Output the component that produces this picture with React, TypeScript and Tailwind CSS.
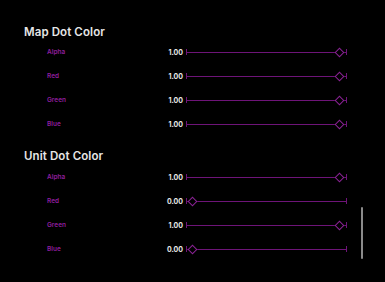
import React from "react";

type Row = { label: string; value: number };

const sections: { title: string; rows: Row[] }[] = [
  {
    title: "Map Dot Color",
    rows: [
      { label: "Alpha", value: 1 },
      { label: "Red", value: 1 },
      { label: "Green", value: 1 },
      { label: "Blue", value: 1 },
    ],
  },
  {
    title: "Unit Dot Color",
    rows: [
      { label: "Alpha", value: 1 },
      { label: "Red", value: 0 },
      { label: "Green", value: 1 },
      { label: "Blue", value: 0 },
    ],
  },
];

function Slider({ value }: { value: number }) {
  const left = 6.5 + value * 147;
  return (
    <div className="relative flex items-center w-[161px] h-[12px]">
      <div className="w-[1px] h-[6px] bg-[#6e1478]" />
      <div className="flex-1 h-[1px] bg-[#6e1478]" />
      <div className="w-[1px] h-[6px] bg-[#6e1478]" />
      <div
        className="absolute top-[2.5px] w-[7px] h-[7px] border border-[#8a2294] bg-black rotate-45"
        style={{ left: left - 3.5 }}
      />
    </div>
  );
}

export default function App() {
  return (
    <div
      className="relative w-[385px] h-[282px] bg-black overflow-hidden pl-[24px] pt-[25px] flex flex-col gap-[13px]"
      style={{ fontFamily: "Inter, 'Noto Sans', sans-serif" }}
    >
      {sections.map((s, i) => (
        <div key={s.title} className="flex flex-col">
          <div className="h-[15px] leading-[15px] text-[11.5px] font-semibold text-[#e6e6e6] tracking-[0.1px]">
            {s.title}
          </div>
          <div className={i === 0 ? "flex flex-col" : "flex flex-col pt-[1px]"}>
            {s.rows.map((r) => (
              <div key={r.label} className="flex items-center h-[24px]">
                <span className="ml-[23px] w-[110px] leading-none pt-[1px] text-[6.5px] font-semibold text-[#8e1e9c]">
                  {r.label}
                </span>
                <span className="w-[26px] leading-none text-right text-[7px] font-bold text-[#e8e8e8]">
                  {r.value.toFixed(2)}
                </span>
                <div className="ml-[3px]">
                  <Slider value={r.value} />
                </div>
              </div>
            ))}
          </div>
        </div>
      ))}
      <div className="absolute left-[361px] top-[207px] w-[2px] h-[52px] rounded-full bg-[#8a8a8a]" />
    </div>
  );
}
